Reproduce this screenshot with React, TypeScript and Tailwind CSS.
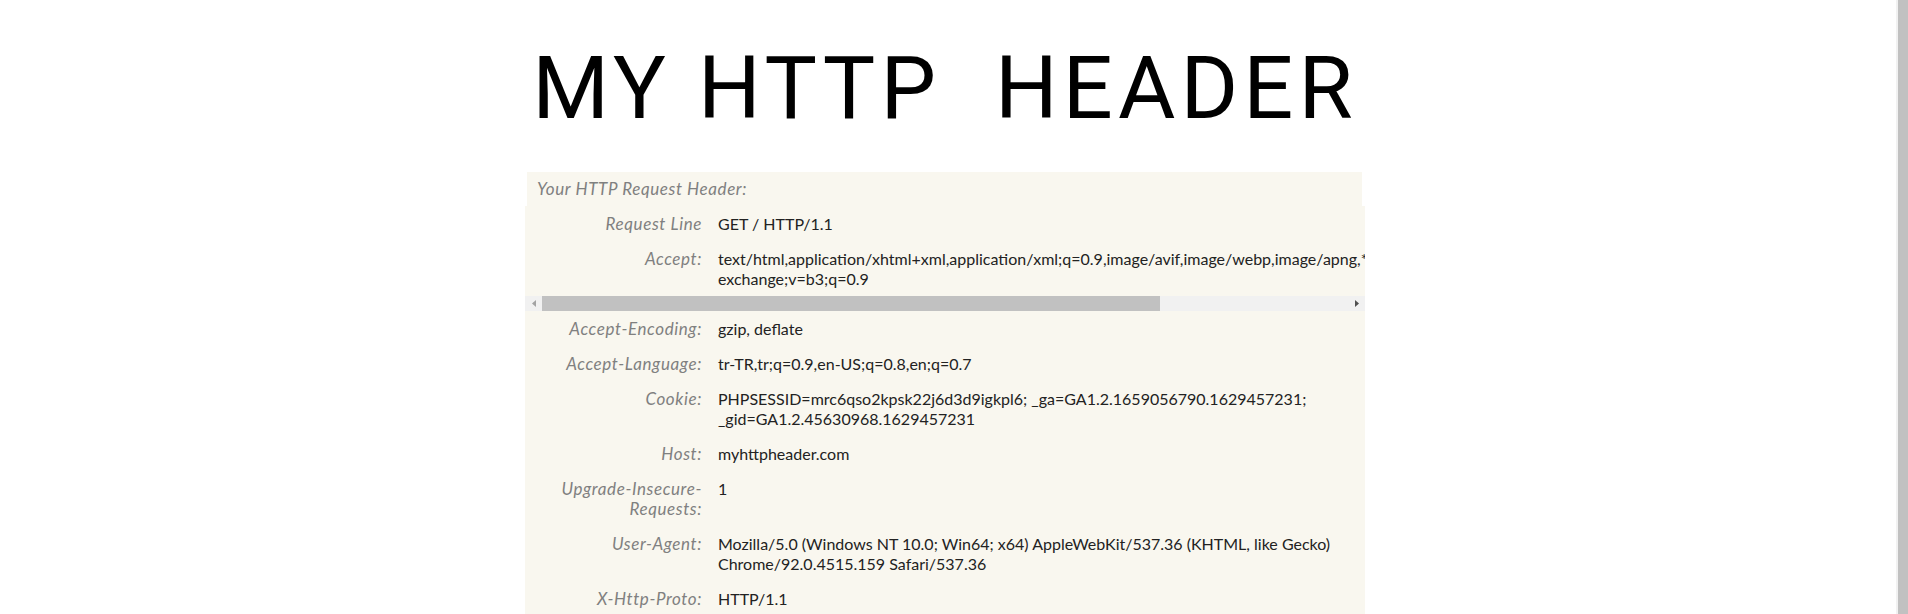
interface HeaderRow {
  label: string;
  lines: string[];
}

const scrollRows: HeaderRow[] = [
  { label: 'Request Line', lines: ['GET / HTTP/1.1'] },
  {
    label: 'Accept:',
    lines: [
      'text/html,application/xhtml+xml,application/xml;q=0.9,image/avif,image/webp,image/apng,*/*;q=0.8,application/signed-',
      'exchange;v=b3;q=0.9',
    ],
  },
];

const rows: HeaderRow[] = [
  { label: 'Accept-Encoding:', lines: ['gzip, deflate'] },
  { label: 'Accept-Language:', lines: ['tr-TR,tr;q=0.9,en-US;q=0.8,en;q=0.7'] },
  {
    label: 'Cookie:',
    lines: ['PHPSESSID=mrc6qso2kpsk22j6d3d9igkpl6; _ga=GA1.2.1659056790.1629457231;', '_gid=GA1.2.45630968.1629457231'],
  },
  { label: 'Host:', lines: ['myhttpheader.com'] },
  { label: 'Upgrade-Insecure-Requests:', lines: ['1'] },
  {
    label: 'User-Agent:',
    lines: ['Mozilla/5.0 (Windows NT 10.0; Win64; x64) AppleWebKit/537.36 (KHTML, like Gecko)', 'Chrome/92.0.4515.159 Safari/537.36'],
  },
  { label: 'X-Http-Proto:', lines: ['HTTP/1.1'] },
];

function Row({ row }: { row: HeaderRow }) {
  return (
    <div className="flex py-[7.5px] text-[16px] leading-[20px]">
      <div className="w-[193px] shrink-0 pl-[30px] pr-[16px] text-right text-[17px] italic tracking-[0.035em] text-[#808080]">
        {row.label}
      </div>
      <div className="text-[#222]">
        {row.lines.map((line) => (
          <div key={line} className="whitespace-nowrap">
            {line}
          </div>
        ))}
      </div>
    </div>
  );
}

function HScrollbar() {
  return (
    <div className="flex h-[15px] bg-[#f1f1f1]">
      <div className="flex w-[17px] items-center justify-center">
        <svg width="4" height="7" viewBox="0 0 4 7">
          <path d="M4 0 L0 3.5 L4 7 Z" fill="#a3a3a3" />
        </svg>
      </div>
      <div className="flex flex-1">
        <div className="w-[618px] bg-[#c1c1c1]" />
      </div>
      <div className="flex w-[17px] items-center justify-center">
        <svg width="4" height="7" viewBox="0 0 4 7">
          <path d="M0 0 L4 3.5 L0 7 Z" fill="#505050" />
        </svg>
      </div>
    </div>
  );
}

export default function App() {
  return (
    <div className="flex h-[614px] overflow-hidden bg-white font-['Lato',sans-serif]">
      <div className="flex-1 pr-[6px]">
        <div className="mx-auto w-[840px] pt-[44px]">
          <h1 className="flex justify-center whitespace-nowrap font-['Roboto',sans-serif] text-[88px] font-normal leading-[88px] tracking-[0.058em] text-black">
            MY HTTP&nbsp; HEADER
          </h1>
          <div className="mt-[40px] ml-[2px] mr-[3px] h-[34px] bg-[#f9f7ef] pl-[10px] text-[17px] leading-[34px] italic tracking-[0.035em] text-[#808080]">
            Your HTTP Request Header:
          </div>
          <div className="bg-[#f9f7ef]">
            <div className="overflow-hidden">
              <div className="w-[1090px]">
                {scrollRows.map((r) => (
                  <Row key={r.label} row={r} />
                ))}
              </div>
            </div>
            <HScrollbar />
            {rows.map((r) => (
              <Row key={r.label} row={r} />
            ))}
          </div>
        </div>
      </div>
      <div className="w-[12px] border-l-2 border-[#f1f1f1] bg-[#c1c1c1]" />
    </div>
  );
}
